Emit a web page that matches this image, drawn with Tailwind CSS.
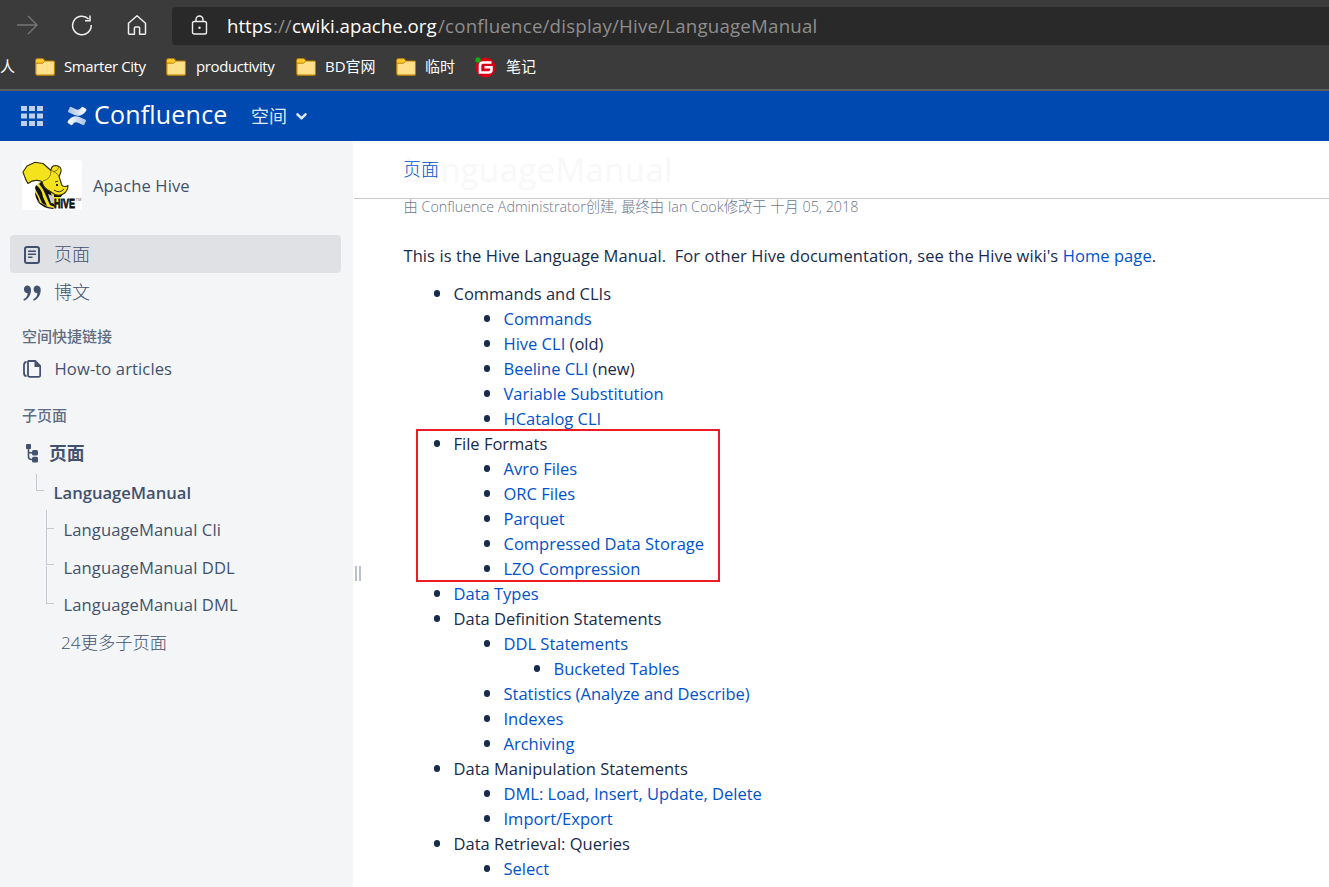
<!DOCTYPE html>
<html lang="zh">
<head>
<meta charset="utf-8">
<title>LanguageManual - Apache Hive</title>
<script src="https://cdn.jsdelivr.net/npm/@tailwindcss/browser@4"></script>
</head>
<body class="w-[1329px] h-[887px] overflow-hidden bg-white font-['Open_Sans','Noto_Sans_CJK_SC',sans-serif] text-[#172b4d]">
<svg class="hidden">
  <symbol id="folder" viewBox="0 0 20 18"><path d="M.8 2.200a1.400 1.400 0 0 1 1.400-1.400H8l2 2.200h8.300a1.200 1.200 0 0 1 1.200 1.200v11.600a1.400 1.400 0 0 1-1.400 1.400H2.200a1.400 1.400 0 0 1-1.400-1.400z" fill="#ffe08a" stroke="#b98000" stroke-width="1.200"/><path d="M1.300 2.200a.9.9 0 0 1 .9-.9H7.800L9.300 3 7.500 5H1.300z" fill="#ffc928"/><path d="M1 5.200h6.600L9.800 3" fill="none" stroke="#b98000"/></symbol>
</svg>

<!-- Browser toolbar -->
<div class="flex h-[50px] items-start bg-[#3b3b3b]">
  <svg class="ml-4 mt-3.5 shrink-0" width="22" height="22" viewBox="0 0 22 22" fill="none" stroke="#777" stroke-width="1.300"><path d="M1 11h20M12 2l9 9-9 9"/></svg>
  <svg class="ml-[33px] mt-[14px] shrink-0" width="22" height="22" viewBox="0 0 22 22" fill="none" stroke="#eee" stroke-width="1.500"><path d="M20.200 11A9.300 9.300 0 1 1 17.600 5M14 6.700h5V1.500"/></svg>
  <svg class="ml-[33px] mt-[14px] shrink-0" width="22" height="22" viewBox="0 0 22 22" fill="none" stroke="#eee" stroke-width="1.500" stroke-linejoin="round"><path d="M2.500 9.200 11 1.800l8.500 7.400V19.500a.8.8 0 0 1-.8.8H13.600V14a1 1 0 0 0-1-1H9.400a1 1 0 0 0-1 1v6.300H3.300a.8.8 0 0 1-.8-.8z"/></svg>
  <div class="ml-6 mt-[7px] flex h-[38px] flex-1 items-center rounded-l-[4px] bg-[#292929] pl-[19px]">
    <svg class="mb-[2px] shrink-0" width="17" height="20" viewBox="0 0 17 20" fill="none" stroke="#eee" stroke-width="1.400"><rect x="1.500" y="6.500" width="14" height="12.500" rx="1.800"/><path d="M5 6.500V4.500a3.500 3.500 0 0 1 7 0v2"/><circle cx="8.500" cy="12.700" r="1.200" fill="#eee" stroke="none"/></svg>
    <div class="ml-[19px] flex whitespace-pre text-[18.700px] text-[#8e8e8e]"><span class="w-[46px] text-white">https</span><span class="w-[19px]">://</span><span class="w-[146px] text-white">cwiki.apache.org</span><span class="tracking-[0.2px]">/confluence/display/Hive/LanguageManual</span></div>
  </div>
</div>
<!-- Favourites bar -->
<div class="flex h-[41px] items-center whitespace-nowrap border-b-2 border-[#5e5e5e] bg-[#3b3b3b] pb-[5px] text-[15px] text-white [&>span]:-mt-[2px]">
  <span class="w-[35px]">人</span>
  <svg class="shrink-0" width="20" height="18"><use href="#folder"/></svg><span class="ml-[9px] w-[102px] tracking-[-0.4px]">Smarter City</span>
  <svg class="shrink-0" width="20" height="18"><use href="#folder"/></svg><span class="ml-[10px] w-[100px] tracking-[-0.4px]">productivity</span>
  <svg class="shrink-0" width="20" height="18"><use href="#folder"/></svg><span class="ml-[9px] w-[71px]">BD官网</span>
  <svg class="shrink-0" width="20" height="18"><use href="#folder"/></svg><span class="ml-[9px] w-[51px]">临时</span>
  <svg class="-ml-px shrink-0" width="21" height="21" viewBox="0 0 21 21"><circle cx="10.500" cy="10.500" r="10" fill="#dc0014"/><circle cx="3" cy="3" r="2.700" fill="#1a1"/><path d="M16.500 5.500H8q-3 0-3 3V15.500h8.500q3 0 3-3V10.300H9.500" fill="none" stroke="#fff" stroke-width="2.600"/></svg><span class="ml-[10px]">笔记</span>
</div>

<!-- Confluence header -->
<header class="flex h-[50px] items-center bg-[#0049b0] text-white">
  <svg class="ml-[21px]" width="22" height="20" viewBox="0 0 22 20" fill="#bfd0ec"><path d="M0 0h6v5H0zM8 0h6v5H8zM16 0h6v5h-6zM0 7.500h6v5H0zM8 7.500h6v5H8zM16 7.500h6v5h-6zM0 15h6v5H0zM8 15h6v5H8zM16 15h6v5h-6z"/></svg>
  <svg class="ml-6 mb-px" width="20" height="20" viewBox="0 0 20 20"><defs><linearGradient id="g1" x1="0" y1="0" x2="1" y2="0"><stop offset="0" stop-color="#fff"/><stop offset="1" stop-color="#fff" stop-opacity=".65"/></linearGradient></defs><path id="wing" d="M.8 15.300Q5.500 8.500 12.500 11L18.600 13.700Q19.400 14.200 19 15L17.300 18.600Q16.800 19.400 15.800 19L10.500 16.600Q7.500 15.400 5.400 18.700Q4.900 19.500 4 19L1.200 17.300Q.1 16.600.8 15.300z" fill="url(#g1)"/><use href="#wing" transform="rotate(180 10 10)"/></svg>
  <span class="ml-[7px] mb-0.5 w-[157px] whitespace-nowrap text-[25px] font-normal tracking-[0.2px]">Confluence</span>
  <span class="w-[37px] whitespace-nowrap text-[18px] text-[#dce7f7]">空间</span>
  <svg class="ml-[8px]" width="11" height="7" viewBox="0 0 11 7" fill="none" stroke="#dce7f7" stroke-width="2.500" stroke-linecap="round" stroke-linejoin="round"><path d="M1.500 1.300l4 4 4-4"/></svg>
</header>

<div class="flex h-[746px]">
  <!-- Space sidebar -->
  <aside class="w-[353px] shrink-0 whitespace-nowrap bg-[#f4f5f7] text-[16.600px] text-[#42526e]">
    <div class="flex h-[94px] items-center gap-[11px] pl-[22px] pb-[6px]">
      <svg class="rounded-[3px] bg-white" width="60" height="50" viewBox="0 0 60 50">
        <path d="M22 20q-7 2-9 9-1 9 7 15 7 4 14 4l6-17z" fill="#f3e21c"/>
        <path d="M20 21q7 4 9 12l4 14-5-2-4-9q-3-8-7-12zM14 25q6 4 7 12l4 9-5-3-3-7q-3-5-4-8zM13 32q3 4 5 11l-3-3q-2-4-2-8zM24 20q9 6 8 17h7l4-7-10-10zM15 41l11 6 6 1-1 1q-11-1-16-8" fill="#111"/>
        <path d="M1 12 5 6 13 2.300l8 1.200 8 7q0-5 5-5 6 1 5 6-1 3-2 5l3 9q3 2 6 0 0 5-4 8-4 3-9 1l-8-5q-4-3-5-8-8-3-14 2Q4 21 1 12Z" fill="#f3e21c" stroke="#302c0b" stroke-width="1.100" stroke-linejoin="round"/>
        <path d="M21 21q8-2 8-10M29 10q5 2 8 6M31 12q5-1 6-5" fill="none" stroke="#7a7012" stroke-width=".9"/>
        <circle cx="35" cy="25" r="1.100"/><path d="M32 30q6 4 10-1M33 22l3-1" fill="none" stroke="#333"/>
        <path d="M26 34l5 2 2 8-4-1z" fill="#ccc"/>
        <text x="32" y="48" font-family="Liberation Sans" font-size="13.500" font-weight="bold" textLength="21" lengthAdjust="spacingAndGlyphs" fill="#111" stroke="#111" stroke-width=".8">HIVE</text>
        <text x="53.500" y="41" font-family="Liberation Sans" font-size="4" fill="#555">TM</text>
      </svg>
      <span class="mt-[2px] tracking-[0.1px]">Apache Hive</span>
    </div>
    <div class="ml-2.5 flex h-[38px] w-[331px] items-center rounded-[4px] bg-[#dfe1e5] pl-[14px] font-light">
      <svg class="mt-px" width="16" height="18" viewBox="0 0 16 18" fill="none" stroke="#42526e"><rect x="1" y="1" width="14" height="16" rx="2" stroke-width="2"/><path d="M4 5.200h8M4 8.200h8M4 11.200h4.500" stroke-width="1.500"/></svg>
      <span class="ml-[14px] mt-px text-[18px]">页面</span>
    </div>
    <div class="flex h-[37px] items-center pl-[23px] font-light">
      <svg class="mt-[2px]" width="18" height="16" viewBox="0 0 18 16" fill="#42526e"><path id="q" d="M4 .5a4 4 0 0 1 4 4.300C8 10 5.500 14 1 15.700l-.7-1.200C3 13 4.500 11 4.700 8.200A3.900 3.900 0 0 1 4 .5z"/><use href="#q" x="9.700"/></svg>
      <span class="ml-[13px] mt-[2px] text-[18px]">博文</span>
    </div>
    <div class="mt-[14px] flex h-[24px] items-center pl-[22px] text-[15px] font-medium text-[#5e6c84]">空间快捷链接</div>
    <div class="mt-[2px] flex h-[38px] items-center pl-[23px] font-normal">
      <svg width="18" height="18" viewBox="0 0 18 18" fill="none" stroke="#42526e" stroke-width="1.800"><path d="M3.500 2Q1 2 1 5v8q0 3 2.500 3M5.500 1h6.700l5 5v9.300a1.500 1.500 0 0 1-1.500 1.500H6.500a1.500 1.500 0 0 1-1.500-1.500V1.500z"/><path d="M11.500 1l6 6h-6z" fill="#42526e" stroke="none"/></svg>
      <span class="ml-[13.500px] tracking-[0.1px]">How-to articles</span>
    </div>
    <div class="mt-[14px] flex h-[26px] items-center pl-[22px] text-[15px] font-medium text-[#5e6c84]">子页面</div>
    <div class="mt-[6px] flex h-[38px] items-center pl-[25px]">
      <svg width="14" height="19" viewBox="0 0 14 19" fill="#42526e"><rect x="1" width="5" height="5" rx=".8"/><path d="M3.500 4v8.500q0 3 3 3H8M3.500 8.800H8" fill="none" stroke="#42526e" stroke-width="1.600"/><rect x="7" y="6" width="6" height="5.500" rx="1.500"/><rect x="7" y="12.800" width="6" height="5.700" rx="1.500"/></svg>
      <span class="ml-[10px] text-[17.800px] font-bold">页面</span>
    </div>
    <div class="flex h-[38px] pl-9">
      <span class="mt-[2px] h-[17px] w-2 border-b border-l border-[#c4c8cf]"></span>
      <span class="ml-[9.500px] mt-[9px] leading-[24px] font-semibold">LanguageManual</span>
    </div>
    <div class="flex h-[38px] pl-[46px]"><span class="flex h-[38px] w-2 border-l border-[#c4c8cf]"><span class="mt-[18px] h-px w-2 bg-[#c4c8cf]"></span></span><span class="ml-[9.500px] mt-[8px] leading-[24px] tracking-[0.09px]">LanguageManual Cli</span></div>
    <div class="flex h-[37px] pl-[46px]"><span class="h-[17px] w-2 border-b border-l border-[#c4c8cf]"></span><span class="ml-[9.500px] mt-[8px] leading-[24px] tracking-[0.09px]">LanguageManual DDL</span></div>
    <div class="-mt-[19px] flex h-[57px] pl-[46px]"><span class="h-[38px] w-2 border-b border-l border-[#c4c8cf]"></span><span class="ml-[9.500px] mt-[27px] leading-[24px] tracking-[0.09px]">LanguageManual DML</span></div>
    <div class="mt-px flex h-[38px] items-center pl-[61px] text-[17.300px] font-light">24更多子页面</div>
  </aside>

  <!-- Page content -->
  <main class="relative flex-1">
    <div class="absolute left-0.5 top-[425px] flex gap-[2px]"><span class="h-[15px] w-[2px] bg-[#bcc2cc]"></span><span class="h-[15px] w-[2px] bg-[#bcc2cc]"></span></div>
    <div class="absolute left-[51px] top-[5px] text-[33px] leading-[48px] font-medium tracking-[0.35px] text-[#f8f8f8]">LanguageManual</div>
    <div class="relative ml-px flex h-[58px] items-center border-b border-[#c9c9c9] pl-[49px] pb-px text-[18px] font-light text-[#0052cc]">页面</div>
    <div class="pl-[50.500px] text-[16.500px] whitespace-nowrap">
      <div class="mt-[-4px] flex h-[24px] items-center text-[14.300px] font-light text-[#6b778c]">由 Confluence Administrator创建, 最终由 Ian Cook修改于 十月 05, 2018</div>
      <p class="mt-[25px] flex h-[25px] items-center whitespace-pre tracking-[0.075px]"><span>This is the Hive Language Manual.  For other Hive documentation, see the Hive wiki's <a class="text-[#0052cc]">Home page</a>.</span></p>
      <div class="relative mt-[12px] leading-[25px] [&_li]:list-none [&_li>span]:flex [&_li>span]:h-[25px] [&_li>span]:items-center [&_li>span]:before:mr-[13.500px] [&_li>span]:before:size-[6.500px] [&_li>span]:before:rounded-full [&_li>span]:before:bg-[#172b4d] [&_li>span]:before:content-[''] [&_ul]:pl-[50px] [&_a]:text-[#0052cc]">
        <div class="absolute left-[12.500px] top-[148px] h-[153px] w-[304px] border-2 border-[#ed1c24]"></div>
        <ul class="-ml-[20px]">
          <li><span>Commands and CLIs</span>
            <ul><li><span><a>Commands</a></span></li><li><span><a>Hive CLI</a>&nbsp;(old)</span></li><li><span><a>Beeline CLI</a>&nbsp;(new)</span></li><li><span><a>Variable Substitution</a></span></li><li><span><a>HCatalog CLI</a></span></li></ul></li>
          <li><span>File Formats</span>
            <ul><li><span><a>Avro Files</a></span></li><li><span><a>ORC Files</a></span></li><li><span><a>Parquet</a></span></li><li><span><a>Compressed Data Storage</a></span></li><li><span><a>LZO Compression</a></span></li></ul></li>
          <li><span><a>Data Types</a></span></li>
          <li><span>Data Definition Statements</span>
            <ul><li><span><a>DDL Statements</a></span><ul><li><span><a>Bucketed Tables</a></span></li></ul></li><li><span><a>Statistics (Analyze and Describe)</a></span></li><li><span><a>Indexes</a></span></li><li><span><a>Archiving</a></span></li></ul></li>
          <li><span>Data Manipulation Statements</span>
            <ul><li><span><a>DML: Load, Insert, Update, Delete</a></span></li><li><span><a>Import/Export</a></span></li></ul></li>
          <li><span>Data Retrieval: Queries</span>
            <ul><li><span><a>Select</a></span></li></ul></li>
        </ul>
      </div>
    </div>
  </main>
</div>
</body>
</html>
